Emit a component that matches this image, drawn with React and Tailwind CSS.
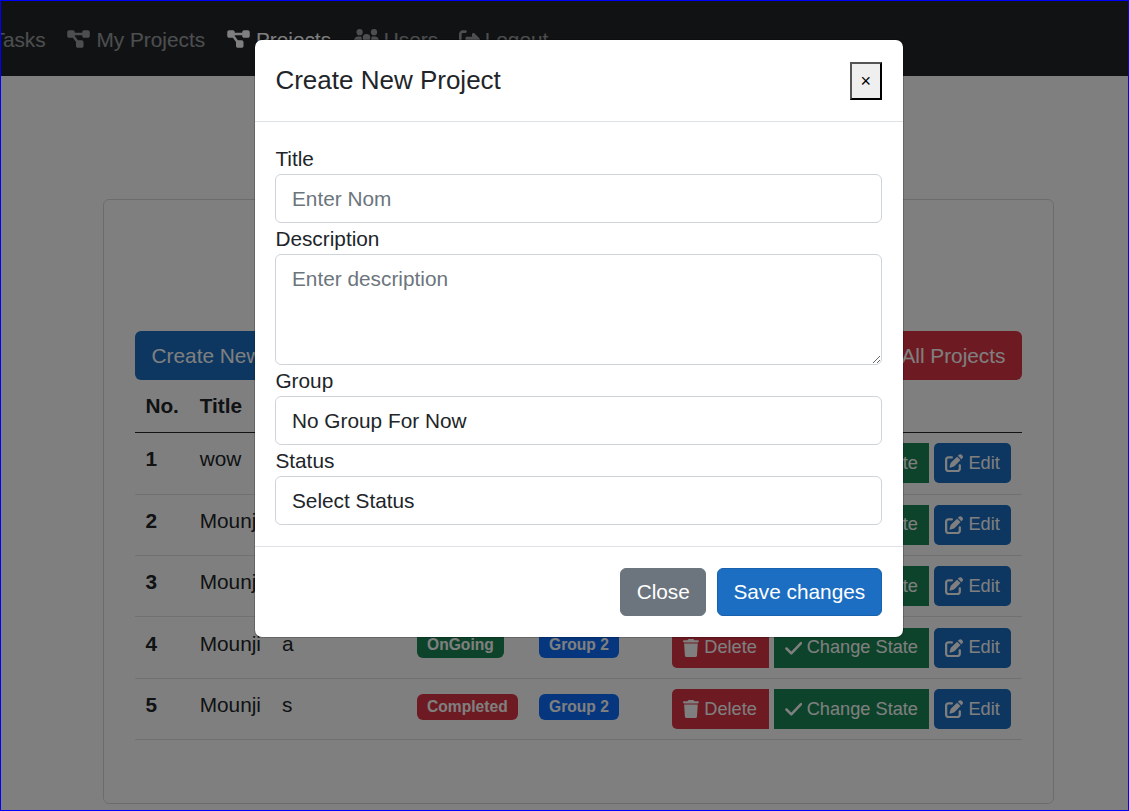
import React from 'react';
import { FaDiagramProject, FaUsers, FaRightFromBracket, FaTrash, FaPenToSquare } from 'react-icons/fa6';

const projects = [
  { id: 1, title: 'wow', description: '', status: 'OnGoing', group: 'Group 1' },
  { id: 2, title: 'Mounji', description: 'z', status: 'OnGoing', group: 'Group 1' },
  { id: 3, title: 'Mounji', description: 'e', status: 'OnGoing', group: 'Group 1' },
  { id: 4, title: 'Mounji', description: 'a', status: 'OnGoing', group: 'Group 2' },
  { id: 5, title: 'Mounji', description: 's', status: 'Completed', group: 'Group 2' },
];

const inputClass = 'block w-full rounded-[6px] border border-[#ced4da] bg-white px-[15.6px] text-[20.8px] text-[#212529] placeholder:text-[#6c757d] outline-none';

const CheckIcon = () => (
  <svg viewBox="0 0 18 18" className="h-[18px] w-[17.5px] shrink-0" fill="none" stroke="currentColor" strokeWidth="2.6" strokeLinecap="round" strokeLinejoin="round">
    <polyline points="1.5,9.5 6.5,14.5 16.5,4" />
  </svg>
);

const NavLink = ({ icon: Icon, iconClass, label, active }) => (
  <a className={`flex items-center gap-[5px] ${active ? 'text-white' : 'text-white/55'}`}>
    {Icon && <Icon className={iconClass} />}
    <span>{label}</span>
  </a>
);

const Field = ({ label, children }) => (
  <div>
    <label className="block h-[31.2px] leading-[31.2px] text-[#212529]">{label}</label>
    {children}
  </div>
);

const Row = ({ project }) => (
  <tr className="border-b border-[#dee2e6] align-top text-[#212529]">
    <td className="p-[10.4px] font-bold">{project.id}</td>
    <td className="p-[10.4px]">{project.title}</td>
    <td className="p-[10.4px]">{project.description}</td>
    <td className="px-[10.4px] pt-[10px]">
      <span className={`inline-block rounded-[6px] px-[10.1px] py-[5.4px] text-[15.6px] font-bold leading-none text-white ${project.status === 'Completed' ? 'bg-[#dc3545]' : 'bg-[#198754]'}`}>
        {project.status}
      </span>
    </td>
    <td className="px-[10.4px] pt-[10px]">
      <span className="inline-block rounded-[6px] bg-[#0d6efd] px-[10.1px] py-[5.4px] text-[15.6px] font-bold leading-none text-white">
        {project.group}
      </span>
    </td>
    <td className="p-[10.4px]">
      <div className="flex gap-[5px] whitespace-nowrap text-[18.2px] text-white">
        <button className="flex h-[39.7px] items-center gap-[5px] rounded-l-[5px] bg-[#dc3545] pl-[11.4px] pr-[12px]">
          <FaTrash className="h-[18.2px] w-[15.9px]" /> Delete
        </button>
        <button className="flex h-[39.7px] items-center gap-[4.5px] bg-[#198754] px-[10.9px]">
          <CheckIcon /> Change State
        </button>
        <button className="flex h-[39.7px] items-center gap-[5px] rounded-[5px] bg-[#1b6ec2] pl-[11.4px] pr-[10.8px]">
          <FaPenToSquare className="h-[18.2px] w-[18.2px]" /> Edit
        </button>
      </div>
    </td>
  </tr>
);

export default function App() {
  return (
    <div className="relative h-[811px] w-[1129px] overflow-hidden border border-[#0000ff] bg-white font-['Liberation_Sans',Arial,sans-serif] text-[20.8px] leading-[31.2px]">
      {/* Navbar */}
      <nav className="h-[75px] overflow-hidden bg-[#212529] pt-[2px]">
        <div className="-ml-[8.5px] flex h-full items-center gap-[20.8px]">
          <NavLink label="Tasks" />
          <NavLink icon={FaDiagramProject} iconClass="h-[20px] w-[25px]" label="My Projects" />
          <NavLink icon={FaDiagramProject} iconClass="h-[20px] w-[25px]" label="Projects" active />
          <div className="ml-[2px]">
            <NavLink icon={FaUsers} iconClass="h-[20px] w-[25px]" label="Users" />
          </div>
          <NavLink icon={FaRightFromBracket} iconClass="h-[20.8px] w-[20.8px]" label="Logout" />
        </div>
      </nav>

      {/* Page card */}
      <main className="pl-[102px] pr-[74px] pt-[123px]">
        <div className="h-[605px] rounded-[6px] border border-black/15 px-[31px] pt-[131px]">
          <div className="flex justify-between">
            <button className="h-[48.8px] rounded-[6px] bg-[#1b6ec2] px-[16.6px] text-white">Create New Project</button>
            <button className="h-[48.8px] rounded-[6px] bg-[#dc3545] px-[16.6px] text-white">Delete All Projects</button>
          </div>
          <table className="w-full table-fixed border-collapse">
            <colgroup>
              <col className="w-[54.3px]" />
              <col className="w-[82.3px]" />
              <col className="w-[135px]" />
              <col className="w-[122px]" />
              <col className="w-[133px]" />
              <col />
            </colgroup>
            <thead>
              <tr className="border-b border-[#212529] text-left text-[#212529]">
                <th className="p-[10.4px] pb-[10.7px] font-bold">No.</th>
                <th className="p-[10.4px] pb-[10.7px] font-bold">Title</th>
                <th className="p-[10.4px] pb-[10.7px] font-bold">Description</th>
                <th className="p-[10.4px] pb-[10.7px] font-bold">Status</th>
                <th className="p-[10.4px] pb-[10.7px] font-bold">Group</th>
                <th className="p-[10.4px] pb-[10.7px] font-bold">Actions</th>
              </tr>
            </thead>
            <tbody>
              {projects.map((project) => (
                <Row key={project.id} project={project} />
              ))}
            </tbody>
          </table>
        </div>
      </main>

      {/* Backdrop */}
      <div className="absolute inset-0 bg-black/50" />

      {/* Modal */}
      <div className="absolute left-[252.6px] top-[38px] w-[650px] rounded-[8px] border border-black/20 bg-white bg-clip-padding text-[#212529]">
        <div className="flex h-[81.6px] items-center justify-between border-b border-[#dee2e6] px-[20.8px]">
          <h5 className="text-[26px] leading-[39px]">Create New Project</h5>
          <button className="mt-[1px] h-[38px] w-[32px] border-2 border-t-[#555555] border-l-[#555555] border-r-black border-b-black bg-[#efefef] text-[18px] leading-none text-black">
            ×
          </button>
        </div>
        <div className="px-[20.8px] pb-[20.4px] pt-[21.2px]">
          <Field label="Title">
            <input className={`${inputClass} h-[48.8px] pt-[1px]`} placeholder="Enter Nom" />
          </Field>
          <Field label="Description">
            <textarea className={`${inputClass} h-[111.2px] py-[7.8px] leading-[31.2px]`} placeholder="Enter description" />
          </Field>
          <Field label="Group">
            <select className={`${inputClass} h-[48.8px] appearance-none`}>
              <option>No Group For Now</option>
            </select>
          </Field>
          <Field label="Status">
            <select className={`${inputClass} h-[48.8px] appearance-none`}>
              <option>Select Status</option>
            </select>
          </Field>
        </div>
        <div className="flex h-[91.4px] items-center justify-end gap-[10.4px] border-t border-[#dee2e6] px-[20.8px] pt-[0.8px]">
          <button className="h-[48.4px] rounded-[6px] border border-[#6c757d] bg-[#6c757d] px-[15.6px] text-white">Close</button>
          <button className="h-[48.4px] rounded-[6px] border border-[#1861ac] bg-[#1b6ec2] px-[15.6px] text-white">Save changes</button>
        </div>
      </div>
    </div>
  );
}
